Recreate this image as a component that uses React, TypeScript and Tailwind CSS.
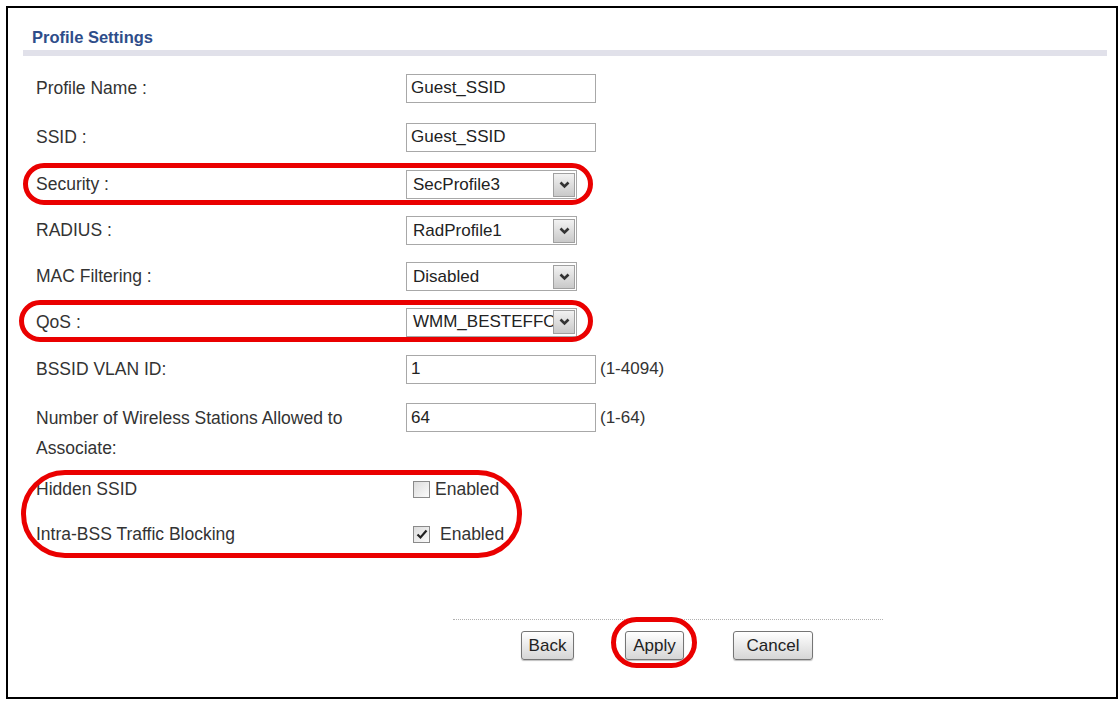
import React from 'react';

function Chevron() {
    return (
        <svg width="11" height="8" viewBox="0 0 11 8">
            <polyline points="1.5,1.5 5.5,5.5 9.5,1.5" fill="none" stroke="#333" strokeWidth="2.6" />
        </svg>
    );
}

function TextBox({ value }: { value: string }) {
    return (
        <div className="w-[190px] h-[29px] border border-[#a8a8a8] pl-[4px] flex items-center text-[17px] text-[#222] bg-white">
            {value}
        </div>
    );
}

function Select({ value }: { value: string }) {
    return (
        <div className="w-[171px] h-[29px] border border-[#a8a8a8] flex items-center bg-white">
            <div className="flex-1 overflow-hidden whitespace-nowrap pl-[6px] text-[17px] text-[#222]">{value}</div>
            <div className="w-[22px] h-[24px] mr-[1px] border border-[#a0a0a0] bg-linear-to-b from-[#f2f2f2] to-[#c9c9c9] flex items-center justify-center">
                <Chevron />
            </div>
        </div>
    );
}

function Checkbox({ checked }: { checked?: boolean }) {
    return (
        <div className="w-[17px] h-[17px] border border-[#8a8a8a] bg-linear-to-br from-[#dcdcdc] to-[#fbfbfb] flex items-center justify-center">
            {checked && (
                <svg width="12" height="11" viewBox="0 0 12 11">
                    <polyline points="1.5,5.5 4.5,8.5 10.5,1.5" fill="none" stroke="#222" strokeWidth="2.2" />
                </svg>
            )}
        </div>
    );
}

function Row({ label, height, children }: { label: string; height: string; children: React.ReactNode }) {
    return (
        <div className={`grid grid-cols-[370px_1fr] items-center ${height}`}>
            <div className="text-[17.5px] text-[#333]">{label}</div>
            <div className="flex items-center">{children}</div>
        </div>
    );
}

function Button({ text, width }: { text: string; width: string }) {
    return (
        <div
            className={`${width} h-[29px] border border-[#757575] rounded-[3px] bg-linear-to-b from-white to-[#d6d6d6] flex items-center justify-center text-[17px] text-[#222] shadow-[0_1px_1px_rgba(0,0,0,0.25)]`}
        >
            {text}
        </div>
    );
}

export default function App() {
    return (
        <div className="relative w-[1120px] h-[701px] bg-white pt-[6px] pl-[6px] font-[Liberation_Sans,Arial,sans-serif]">
            <div className="w-[1112px] h-[693px] border-2 border-black">
                {/* Title */}
                <div className="pl-[15px] pr-[9px] pt-[19px]">
                    <h2 className="pl-[9px] text-[16.5px] leading-[20px] font-bold text-[#2e4d8a]">Profile Settings</h2>
                    <div className="mt-[3px] h-[6px] bg-[#e1e1ea]" />
                </div>

                {/* Form */}
                <div className="mt-[8px] pl-[28px]">
                    <Row label="Profile Name :" height="h-[48px]">
                        <TextBox value="Guest_SSID" />
                    </Row>
                    <Row label="SSID :" height="h-[50px]">
                        <TextBox value="Guest_SSID" />
                    </Row>
                    <Row label="Security :" height="h-[45px]">
                        <Select value="SecProfile3" />
                    </Row>
                    <Row label="RADIUS :" height="h-[47px]">
                        <Select value="RadProfile1" />
                    </Row>
                    <Row label="MAC Filtering :" height="h-[45px]">
                        <Select value="Disabled" />
                    </Row>
                    <Row label="QoS :" height="h-[46px]">
                        <Select value="WMM_BESTEFFORT" />
                    </Row>
                    <Row label="BSSID VLAN ID:" height="h-[48px]">
                        <TextBox value="1" />
                        <span className="ml-[4px] text-[17px] text-[#333]">(1-4094)</span>
                    </Row>
                    <div className="grid grid-cols-[370px_1fr] items-start h-[74px] pt-[10px]">
                        <div className="text-[17.5px] leading-[30px] text-[#333]">
                            Number of Wireless Stations Allowed to
                            <br />
                            Associate:
                        </div>
                        <div className="flex items-center">
                            <TextBox value="64" />
                            <span className="ml-[4px] text-[17px] text-[#333]">(1-64)</span>
                        </div>
                    </div>
                    <div className="grid grid-cols-[370px_1fr] items-center h-[45px]">
                        <div className="text-[17.5px] text-[#333]">Hidden SSID</div>
                        <div className="flex items-center pl-[7px]">
                            <Checkbox />
                            <span className="ml-[5px] text-[17.5px] text-[#333]">Enabled</span>
                        </div>
                    </div>
                    <div className="grid grid-cols-[370px_1fr] items-center h-[45px]">
                        <div className="text-[17.5px] text-[#333]">Intra-BSS Traffic Blocking</div>
                        <div className="flex items-center pl-[7px]">
                            <Checkbox checked />
                            <span className="ml-[10px] text-[17.5px] text-[#333]">Enabled</span>
                        </div>
                    </div>
                </div>

                {/* Footer buttons */}
                <div className="mt-[62px] ml-[445px] w-[430px] border-t border-dotted border-[#b0b0b0]">
                    <div className="flex pt-[11px] pl-[68px]">
                        <Button text="Back" width="w-[53px]" />
                        <div className="w-[51px]" />
                        <Button text="Apply" width="w-[59px]" />
                        <div className="w-[49px]" />
                        <Button text="Cancel" width="w-[80px]" />
                    </div>
                </div>
            </div>

            {/* Red annotation marks */}
            <div className="absolute left-[23px] top-[163px] w-[570px] h-[42px] border-[5px] border-[#ea0000] rounded-full" />
            <div className="absolute left-[19px] top-[300px] w-[574px] h-[42px] border-[5px] border-[#ea0000] rounded-full" />
            <div className="absolute left-[21px] top-[470px] w-[501px] h-[88px] border-[5px] border-[#ea0000] rounded-full" />
            <div className="absolute left-[611px] top-[617px] w-[86px] h-[51px] border-[5px] border-[#ea0000] rounded-full" />
        </div>
    );
}
